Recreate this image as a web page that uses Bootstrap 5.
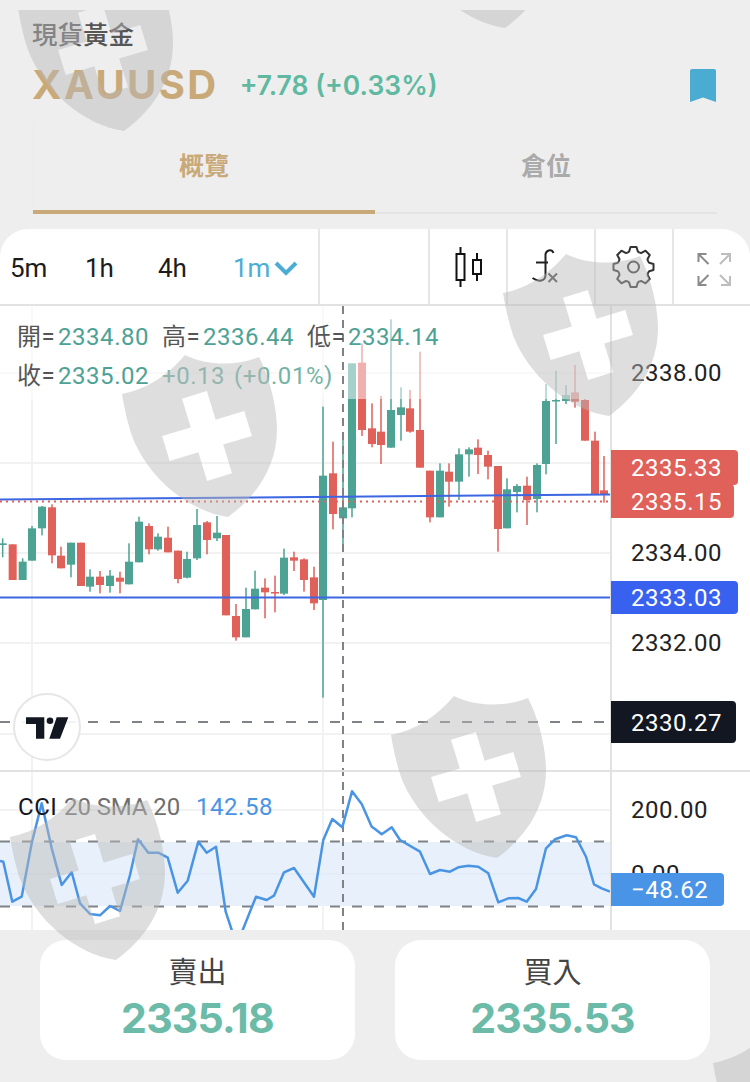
<!doctype html>
<html lang="zh-Hant">
<head>
<meta charset="utf-8">
<title>XAUUSD</title>
<link href="https://cdn.jsdelivr.net/npm/bootstrap@5.3.0/dist/css/bootstrap.min.css" rel="stylesheet">
<style>
html,body{margin:0;background:#eee}
body{font-family:Inter,"Noto Sans CJK TC",sans-serif}
.screen{position:relative;width:750px;height:1082px;overflow:hidden;background:#eee}
.wm{position:absolute;left:0;top:0;width:750px;height:1082px;pointer-events:none;z-index:5}
.head{padding:16px 34px 0 32px}
.kind{font-family:"Noto Sans CJK TC",sans-serif;font-size:25.500px;line-height:34px;color:#555;font-weight:500}
.symrow{height:42px;margin-top:14px}
.sym{font-size:40px;font-weight:700;letter-spacing:2.400px;color:#c9a978;line-height:42px}
.chg{font-size:26.500px;font-weight:600;color:#5fb9a0;margin-left:21px;line-height:42px}
.tabs{margin:15px 32px 0 32px;height:92px;border:1px solid #ececec;border-bottom:0}
.tabx{flex:1 1 0;height:92px;display:flex;align-items:center;justify-content:center;font-family:"Noto Sans CJK TC",sans-serif;font-size:25px;font-weight:700;color:#aaa;border-bottom:2px solid #e4e4e4;padding-bottom:4px}
.tabx.on{color:#c9a978;border-bottom:4px solid #c9a978;padding-bottom:2px}
.chartbox{margin-top:16px;height:701px;background:#fff;border-radius:28px 28px 0 0;overflow:hidden}
.tools{height:77px;border-bottom:2px solid #e2e2e2}
.cell{height:75px;border-right:2px solid #e6e6e6;flex:none}
.c-time{width:320px;padding:3px 0 0 10px;font-family:Roboto,sans-serif;font-size:26px;color:#1c1c1c}
.t1{width:75px}.t2{width:73px}.t3{width:75px}
.t4{color:#4badd3}
.c-blank{width:110px}.c-a{width:78px}.c-b{width:88px}.c-c{width:78px}.c-d{width:77px;border-right:0}
.cell svg{display:block}
.plot{display:block;width:750px;height:624px}
.plot text{font-family:Roboto,"Noto Sans CJK TC",sans-serif;font-size:24px;letter-spacing:.55px}
.plot .tight{letter-spacing:-.1px}
.deal{padding:10px 40px 0;gap:40px}
.dealbtn{width:315px;height:120px;border-radius:26px;background:#fff;text-align:center;padding-top:10px}
.dlab{font-family:"Noto Sans CJK TC",sans-serif;font-size:29px;line-height:40px;color:#444}
.dval{font-size:41px;font-weight:700;line-height:56px;color:#6bbba8;letter-spacing:-.8px}
</style>
</head>
<body>
<div class="screen">
  <div class="head">
    <div class="kind">現貨黃金</div>
    <div class="symrow d-flex align-items-center">
      <span class="sym">XAUUSD</span>
      <span class="chg">+7.78 (+0.33%)</span>
      <svg class="ms-auto" width="26" height="33" viewBox="0 0 26 33"><path fill="#4bacd2" d="M2 0H24a2 2 0 0 1 2 2V33L13 28.500 0 33V2a2 2 0 0 1 2-2Z"/></svg>
    </div>
  </div>
  <div class="tabs d-flex">
    <div class="tabx on">概覽</div>
    <div class="tabx">倉位</div>
  </div>
  <div class="chartbox">
    <div class="tools d-flex">
      <div class="cell c-time d-flex align-items-center">
        <span class="t1">5m</span><span class="t2">1h</span><span class="t3">4h</span><span class="t4">1m</span>
        <svg class="ms-1" width="24" height="16" viewBox="0 0 24 16"><path d="M2 3 12 13 22 3" fill="none" stroke="#4badd3" stroke-width="4"/></svg>
      </div>
      <div class="cell c-blank"></div>
      <div class="cell c-a">
        <svg width="76" height="75" viewBox="430 229 76 75" fill="none" stroke="#111" stroke-width="2">
          <rect x="456.500" y="254" width="8" height="26"/><path d="M460.500 247V254M460.500 280V287"/>
          <rect x="473" y="260" width="8" height="14"/><path d="M477 253V260M477 274V281"/>
        </svg>
      </div>
      <div class="cell c-b">
        <svg width="86" height="75" viewBox="508 229 86 75" fill="none" stroke="#222" stroke-width="2">
          <path d="M553.500 253C552 249 547 249.500 545.500 254V275C545.500 281 539 282.500 532.500 278"/>
          <path d="M536 262.500H548"/>
          <path d="M548.500 273.500 557 282M557 273.500 548.500 282" stroke="#444"/>
        </svg>
      </div>
      <div class="cell c-c">
        <svg width="76" height="75" viewBox="596 229 76 75" fill="none" stroke="#333" stroke-width="2" stroke-linejoin="round">
          <defs><path id="gt" d="M-6-14.300-4.300-15.600-3-20H3L4.300-15.600 6-14.300"/></defs>
          <g transform="translate(633.500 267)">
            <use href="#gt"/><use href="#gt" transform="rotate(45)"/><use href="#gt" transform="rotate(90)"/><use href="#gt" transform="rotate(135)"/>
            <use href="#gt" transform="rotate(180)"/><use href="#gt" transform="rotate(225)"/><use href="#gt" transform="rotate(270)"/><use href="#gt" transform="rotate(315)"/>
            <circle r="5.500"/>
          </g>
        </svg>
      </div>
      <div class="cell c-d">
        <svg width="77" height="75" viewBox="674 229 77 75" fill="none" stroke-width="2">
          <g stroke="#8a8a8a"><path d="M698.500 262V254H706.500M698.500 254 708.500 264"/><path d="M698.500 276V285H706.500M698.500 285 708.500 275"/></g>
          <g stroke="#bdbdbd"><path d="M721 254H730V262M730 254 720 264"/><path d="M721 285H730V276M730 285 720 275"/></g>
        </svg>
      </div>
    </div>
    <svg class="plot" viewBox="0 306 750 624" id="plot">
      <g stroke="#f2f2f2" stroke-width="2" fill="none">
        <path d="M0 373H611M0 463H611M0 553H611M0 643H611M0 734H611M0 810H611M32 306V930M323 306V930"/>
      </g>
      <rect x="0" y="842" width="611" height="64" fill="#e8f1fb"/>
      <path d="M0 874H611" stroke="#e0e8f2" stroke-width="1"/>
      <g id="candles"></g>
      <rect x="0" y="306" width="611" height="93" fill="#fff" fill-opacity=".5"/>
      <path d="M0 499.500 611 494.500" stroke="#3c66e2" stroke-width="2"/>
      <path d="M0 501.500H611" stroke="#e0605a" stroke-width="2" stroke-dasharray="2 4"/>
      <path d="M0 597.500H611" stroke="#3c66e2" stroke-width="2"/>
      <path d="M0 841.500H606M0 906.500H606M0 722H606" stroke="#7f8388" stroke-width="2" stroke-dasharray="10 12"/>
      <path d="M343 306V930" stroke="#7f8388" stroke-width="2" stroke-dasharray="8 6"/>
      <polyline id="cci" fill="none" stroke="#4a94e4" stroke-width="2.500" stroke-linejoin="round"/>
      <path d="M0 771H750" stroke="#e2e2e2" stroke-width="2"/>
      <path d="M611 306V930" stroke="#e2e2e2" stroke-width="2"/>
      <circle cx="47" cy="727" r="33" fill="#fff" fill-opacity=".9" stroke="#e6e6e6" stroke-width="2"/>
      <path d="M0 722H20" stroke="#7f8388" stroke-width="2" stroke-dasharray="10 12"/>
      <path fill="#131722" d="M26 717.300H44.300V738.700H36V724H26ZM68.300 717.300H56.700L49.300 738.700H60Z"/>
      <circle cx="50" cy="720.700" r="3.300" fill="#131722"/>
      <text y="345" fill="#555"><tspan x="17">開=</tspan><tspan x="58" fill="#4da295">2334.80</tspan><tspan x="162">高=</tspan><tspan x="203" fill="#4da295">2336.44</tspan><tspan x="307">低=</tspan><tspan x="348" fill="#4da295">2334.14</tspan></text>
      <text y="384" fill="#555"><tspan x="17">收=</tspan><tspan x="58" fill="#4da295">2335.02</tspan><tspan x="162" fill="#74b3a6">+0.13</tspan><tspan x="234" fill="#74b3a6">(+0.01%)</tspan></text>
      <text y="815"><tspan x="18" fill="#131722">CCI</tspan><tspan x="64" fill="#6e6e6e" class="tight">20 SMA 20</tspan><tspan x="196" fill="#4a94e4">142.58</tspan></text>
      <g fill="#222">
        <text x="631" y="381">2338.00</text>
        <text x="631" y="561">2334.00</text>
        <text x="631" y="651">2332.00</text>
        <text x="631" y="818">200.00</text>
        <text x="631" y="882">0.00</text>
      </g>
      <path fill="#e0605a" d="M611 450H734a4 4 0 0 1 4 4V481a4 4 0 0 1-4 4H611Z"/>
      <path fill="#e0605a" d="M611 484H730a4 4 0 0 1 4 4V514a4 4 0 0 1-4 4H611Z"/>
      <path fill="#3861f0" d="M611 581H734a4 4 0 0 1 4 4V610a4 4 0 0 1-4 4H611Z"/>
      <path fill="#131722" d="M611 701H732a4 4 0 0 1 4 4V739a4 4 0 0 1-4 4H611Z"/>
      <path fill="#4a94e8" d="M611 873H720a4 4 0 0 1 4 4V902a4 4 0 0 1-4 4H611Z"/>
      <g fill="#fff">
        <text x="631" y="476">2335.33</text>
        <text x="631" y="510">2335.15</text>
        <text x="631" y="606">2333.03</text>
        <text x="631" y="731">2330.27</text>
        <text x="631" y="898">−48.62</text>
      </g>
    </svg>
  </div>
  <div class="deal d-flex">
    <div class="dealbtn"><div class="dlab">賣出</div><div class="dval">2335.18</div></div>
    <div class="dealbtn"><div class="dlab">買入</div><div class="dval">2335.53</div></div>
  </div>
  <svg class="wm" viewBox="0 0 750 1082">
    <defs>
      <clipPath id="wmclip"><rect x="0" y="10" width="750" height="1072"/></clipPath>
      <path id="shield" fill-rule="evenodd" d="M-85-42C-60-47-40-60-22-81-0-70 30-70 52-79 62-60 70-30 70-7 70 30 50 60 21 81-20 75-60 40-75 0-80-15-83-30-85-42ZM-25-37.300-.1-44.900 8.600-16.200 37.300-25 44.900-.1 16.200 8.600 25 37.300 .1 44.900-8.600 16.200-37.300 25-44.900 .1-16.200-8.600Z"/>
    </defs>
    <g clip-path="url(#wmclip)" fill="rgb(185,185,185)" fill-opacity=".47">
      <use href="#shield" x="103" y="50"/>
      <use href="#shield" x="484" y="-53"/>
      <use href="#shield" x="588" y="335"/>
      <use href="#shield" x="207" y="436"/>
      <use href="#shield" x="476" y="777"/>
      <use href="#shield" x="95" y="879"/>
      <use href="#shield" x="798" y="1105"/>
    </g>
  </svg>
</div>
<script>
// candle data: x, body top, body bottom, high, low, 1 = rising (zoomed chart units; 3 units = 1px, origin y=310)
var data=[[8,700,705,685,742,1],[38,703,810,703,810,0],[68,755,810,745,810,1],[96,655,752,648,752,1],[126,590,655,588,676,1],[156,592,736,583,760,0],[183,737,775,710,775,0],[213,698,764,698,802,1],[243,698,828,698,828,0],[270,800,830,778,845,1],[300,800,825,783,850,0],[330,797,828,780,848,1],[360,803,815,785,850,0],[387,755,823,700,823,1],[417,635,757,620,757,1],[447,648,718,640,733,0],[474,680,718,670,722,1],[504,683,727,650,727,0],[534,722,807,722,820,0],[561,747,803,725,805,1],[591,645,745,597,750,1],[621,637,690,633,733,0],[651,668,685,618,693,1],[678,675,916,675,916,0],[708,918,982,882,992,0],[738,897,982,833,982,1],[765,836,898,782,898,1],[795,833,847,805,925,0],[825,846,850,797,907,0],[852,743,851,716,855,1],[882,742,752,725,783,0],[912,748,810,745,845,0],[942,802,880,770,900,0],[969,497,870,290,1163,1],[999,490,612,395,658,0],[1029,592,625,390,710,1],[1056,160,595,160,622,1],[1086,158,360,100,378,0],[1116,355,402,280,412,0],[1143,365,405,258,462,0],[1173,300,413,28,413,1],[1203,292,315,232,392,1],[1230,295,365,240,368,0],[1260,360,473,125,473,0],[1290,482,622,482,637,0],[1320,482,622,460,622,1],[1347,485,515,460,590,0],[1377,433,515,415,570,1],[1407,418,433,412,500,1],[1434,413,435,388,492,0],[1464,435,470,422,508,0],[1494,468,657,468,725,0],[1521,538,655,505,655,1],[1551,528,546,522,607,1],[1581,527,570,500,645,0],[1611,465,567,460,607,1],[1638,273,462,222,493,1],[1668,270,274,182,402,1],[1698,255,273,225,282,1],[1725,247,275,165,293,0],[1755,270,392,268,392,0],[1785,392,553,365,553,0],[1812,541,553,438,578,0]];
var ns="http://www.w3.org/2000/svg",g=document.getElementById("candles");
function el(n,a){var e=document.createElementNS(ns,n);for(var k in a)e.setAttribute(k,a[k]);g.appendChild(e);}
function py(v){return 310+v/3;}
data.forEach(function(d){
  var x=d[0]/3,c=d[5]?"#4ca394":"#e0605a";
  el("rect",{x:x-.75,y:py(d[3]),width:1.5,height:(d[4]-d[3])/3,fill:c});
  el("rect",{x:x-4,y:py(d[1]),width:8,height:Math.max((d[2]-d[1])/3,1.5),fill:c});
});
var a=[[0,693],[10,695],[37,815],[65,800],[95,640],[125,520],[155,655],[185,765],[215,727],[240,820],[270,852],[300,856],[330,828],[360,843],[390,735],[414,628],[445,668],[475,668],[503,683],[533,788],[563,752],[595,635],[620,668],[648,650],[677,845],[695,900],[711,960],[728,900],[768,800],[800,810],[822,797],[852,727],[882,714],[942,800],[970,630],[997,567],[1027,592],[1056,484],[1085,522],[1115,590],[1125,597],[1145,613],[1175,592],[1200,630],[1260,665],[1290,732],[1320,720],[1350,725],[1375,712],[1405,707],[1435,710],[1465,730],[1495,817],[1525,805],[1555,804],[1580,815],[1608,777],[1638,655],[1665,628],[1700,616],[1728,622],[1758,680],[1782,763],[1805,775],[1830,785]];
document.getElementById("cci").setAttribute("points",a.map(function(p){return (p[0]/3).toFixed(1)+","+(630+p[1]/3).toFixed(1);}).join(" "));
</script>
<script src="https://cdn.jsdelivr.net/npm/bootstrap@5.3.0/dist/js/bootstrap.bundle.min.js"></script>
</body>
</html>
